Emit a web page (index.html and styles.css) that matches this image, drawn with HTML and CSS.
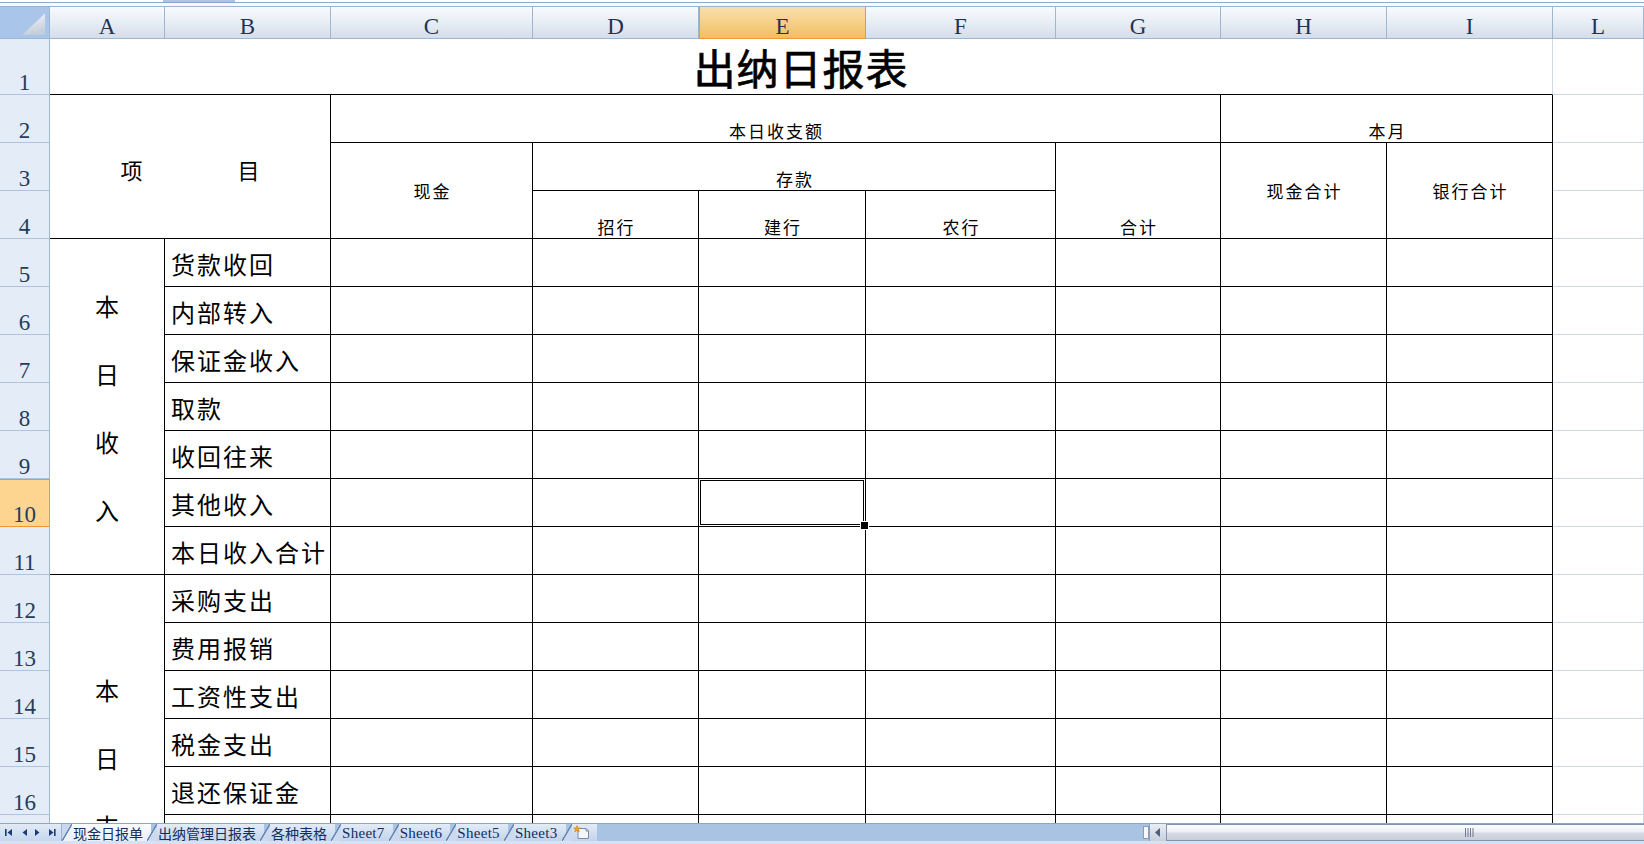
FILE: index.html
```html
<!DOCTYPE html>
<html lang="zh-CN">
<head>
<meta charset="utf-8">
<title>出纳日报表</title>
<link rel="stylesheet" href="styles.css">
</head>
<body>
<div class="top"><span class="top-gap"></span><span class="top-tab"></span></div>
<div class="sheet">
  <div class="grid">
    <div class="corner"><svg width="50" height="32" viewBox="0 0 50 32"><defs><linearGradient id="tg" x1="0" y1="0" x2="0.3" y2="1"><stop offset="0" stop-color="#f6f8fb"/><stop offset="1" stop-color="#c6cfdc"/></linearGradient></defs><polygon points="23,28 46,28 46,6" fill="url(#tg)"/></svg></div>
    <div class="ch">A</div><div class="ch">B</div><div class="ch">C</div><div class="ch">D</div><div class="ch sel">E</div><div class="ch">F</div><div class="ch">G</div><div class="ch">H</div><div class="ch">I</div><div class="ch">L</div>

    <div class="rh">1</div><div class="title">出纳日报表</div><div class="g"></div>

    <div class="rh">2</div><div class="c xm cs2 rs3"><span>项</span><span>目</span></div><div class="c hb cs5">本日收支额</div><div class="c hb cs2">本月</div><div class="g"></div>

    <div class="rh">3</div><div class="c hm rs2">现金</div><div class="c hb cs3">存款</div><div class="c hb rs2">合计</div><div class="c hm rs2">现金合计</div><div class="c hm rs2">银行合计</div><div class="g"></div>

    <div class="rh">4</div><div class="c hb">招行</div><div class="c hb">建行</div><div class="c hb">农行</div><div class="g"></div>

    <div class="rh">5</div><div class="c vt rs7">本<br>日<br>收<br>入</div><div class="c lb">货款收回</div><div class="c"></div><div class="c"></div><div class="c"></div><div class="c"></div><div class="c"></div><div class="c"></div><div class="c"></div><div class="g"></div>
    <div class="rh">6</div><div class="c lb">内部转入</div><div class="c"></div><div class="c"></div><div class="c"></div><div class="c"></div><div class="c"></div><div class="c"></div><div class="c"></div><div class="g"></div>
    <div class="rh">7</div><div class="c lb">保证金收入</div><div class="c"></div><div class="c"></div><div class="c"></div><div class="c"></div><div class="c"></div><div class="c"></div><div class="c"></div><div class="g"></div>
    <div class="rh">8</div><div class="c lb">取款</div><div class="c"></div><div class="c"></div><div class="c"></div><div class="c"></div><div class="c"></div><div class="c"></div><div class="c"></div><div class="g"></div>
    <div class="rh">9</div><div class="c lb">收回往来</div><div class="c"></div><div class="c"></div><div class="c"></div><div class="c"></div><div class="c"></div><div class="c"></div><div class="c"></div><div class="g"></div>
    <div class="rh sel">10</div><div class="c lb">其他收入</div><div class="c"></div><div class="c"></div><div class="c active"></div><div class="c"></div><div class="c"></div><div class="c"></div><div class="c"></div><div class="g"></div>
    <div class="rh">11</div><div class="c lb">本日收入合计</div><div class="c"></div><div class="c"></div><div class="c"></div><div class="c"></div><div class="c"></div><div class="c"></div><div class="c"></div><div class="g"></div>

    <div class="rh">12</div><div class="c vt rs9">本<br>日<br>支<br>出</div><div class="c lb">采购支出</div><div class="c"></div><div class="c"></div><div class="c"></div><div class="c"></div><div class="c"></div><div class="c"></div><div class="c"></div><div class="g"></div>
    <div class="rh">13</div><div class="c lb">费用报销</div><div class="c"></div><div class="c"></div><div class="c"></div><div class="c"></div><div class="c"></div><div class="c"></div><div class="c"></div><div class="g"></div>
    <div class="rh">14</div><div class="c lb">工资性支出</div><div class="c"></div><div class="c"></div><div class="c"></div><div class="c"></div><div class="c"></div><div class="c"></div><div class="c"></div><div class="g"></div>
    <div class="rh">15</div><div class="c lb">税金支出</div><div class="c"></div><div class="c"></div><div class="c"></div><div class="c"></div><div class="c"></div><div class="c"></div><div class="c"></div><div class="g"></div>
    <div class="rh">16</div><div class="c lb">退还保证金</div><div class="c"></div><div class="c"></div><div class="c"></div><div class="c"></div><div class="c"></div><div class="c"></div><div class="c"></div><div class="g"></div>
    <div class="rh">17</div><div class="c lb"></div><div class="c"></div><div class="c"></div><div class="c"></div><div class="c"></div><div class="c"></div><div class="c"></div><div class="c"></div><div class="g"></div>
    <div class="rh">18</div><div class="c lb"></div><div class="c"></div><div class="c"></div><div class="c"></div><div class="c"></div><div class="c"></div><div class="c"></div><div class="c"></div><div class="g"></div>
    <div class="rh">19</div><div class="c lb"></div><div class="c"></div><div class="c"></div><div class="c"></div><div class="c"></div><div class="c"></div><div class="c"></div><div class="c"></div><div class="g"></div>
    <div class="rh">20</div><div class="c lb"></div><div class="c"></div><div class="c"></div><div class="c"></div><div class="c"></div><div class="c"></div><div class="c"></div><div class="c"></div><div class="g"></div>
  </div>
</div>
<div class="tabbar">
  <div class="nav">
    <svg width="62" height="17" viewBox="0 0 62 17">
      <rect x="5" y="5" width="1.6" height="7" fill="#1c3c74"/>
      <polygon points="12,5 12,12 7.5,8.5" fill="#1c3c74"/>
      <polygon points="27,5 27,12 22.5,8.5" fill="#1c3c74"/>
      <polygon points="35,5 35,12 39.5,8.5" fill="#1c3c74"/>
      <polygon points="49,5 49,12 53.5,8.5" fill="#1c3c74"/>
      <rect x="54" y="5" width="1.6" height="7" fill="#1c3c74"/>
    </svg>
  </div>
  <div class="tabs">
    <div class="tab on"><span class="tl">现金日报单</span></div>
    <div class="tab"><span class="tl">出纳管理日报表</span></div>
    <div class="tab"><span class="tl">各种表格</span></div>
    <div class="tab"><span class="tl en">Sheet7</span></div>
    <div class="tab"><span class="tl en">Sheet6</span></div>
    <div class="tab"><span class="tl en">Sheet5</span></div>
    <div class="tab"><span class="tl en">Sheet3</span></div>
    <div class="tab"><span class="tl ic"><svg width="18" height="15" viewBox="0 0 18 15"><path d="M5 3.5 H13 L15.5 6 V13.5 H5 Z" fill="#f4f6fa" stroke="#7d8ca6" stroke-width="1"/><path d="M13 3.5 V6 H15.5" fill="none" stroke="#7d8ca6" stroke-width="1"/><polygon points="4,0.5 5,3 7.5,3 5.5,4.6 6.3,7 4,5.6 1.7,7 2.5,4.6 0.5,3 3,3" fill="#f3a31d" stroke="#c7760c" stroke-width="0.5"/></svg></span></div>
  </div>
  <div class="fill"></div>
  <div class="hscroll">
    <span class="split"></span>
    <span class="arrow"><svg width="12" height="17" viewBox="0 0 12 17"><polygon points="8,4 8,13 3,8.5" fill="#4a5f86"/></svg></span>
    <div class="thumb"><svg width="9" height="9" viewBox="0 0 9 9"><rect x="0" y="0" width="1" height="9" fill="#6d7a90"/><rect x="2.5" y="0" width="1" height="9" fill="#6d7a90"/><rect x="5" y="0" width="1" height="9" fill="#6d7a90"/><rect x="7.5" y="0" width="1" height="9" fill="#6d7a90"/></svg></div>
  </div>
</div>
<div class="status"></div>
</body>
</html>
```

FILE: styles.css
```css
* { box-sizing: border-box; }
html, body { margin: 0; padding: 0; }
body {
  width: 1644px;
  height: 844px;
  overflow: hidden;
  background: #ffffff;
  font-family: "Noto Sans CJK SC", "Noto Sans", sans-serif;
  color: #000;
}

/* strip above the column header */
.top {
  height: 7px;
  display: flex;
  align-items: flex-start;
  background: linear-gradient(#ffffff 0 2px, #8ea6c7 2px 3px, #f7f9fc 3px 6px, #9bb2cf 6px 7px);
}
.top-gap { width: 163px; }
.top-tab { width: 72px; height: 2px; background: #aac4e6; }

/* sheet */
.sheet {
  height: 816px;
  overflow: hidden;
}
.grid {
  display: grid;
  grid-template-columns: 50px 115px 166px 202px 166px 167px 190px 165px 166px 166px 91px;
  grid-template-rows: 32px 56px repeat(19, 48px);
}

.corner {
  background: #aac5ea;
  border-right: 1px solid #9eb6ce;
  border-bottom: 1px solid #9eb6ce;
  display: flex;
}
.ch {
  background: linear-gradient(#f8fafd, #e6ecf4 55%, #d5dde9);
  border-right: 1px solid #9eb6ce;
  border-bottom: 1px solid #9eb6ce;
  display: flex;
  justify-content: center;
  align-items: flex-end;
  font-family: "Liberation Serif", "DejaVu Serif", serif;
  font-size: 23px;
  line-height: 23px;
  color: #1e3455;
}
.ch.sel {
  background: linear-gradient(#f9dfae, #f6d089 50%, #f1bf5c);
  border-right-color: #f29536;
  border-bottom-color: #f29536;
  border-left: 1px solid #f29536;
}
.rh {
  background: #e4ecf7;
  border-right: 1px solid #9eb6ce;
  border-bottom: 1px solid #b0c3dc;
  display: flex;
  justify-content: center;
  align-items: flex-end;
  font-family: "Liberation Serif", "DejaVu Serif", serif;
  font-size: 23px;
  line-height: 23px;
  color: #233d5e;
}
.rh.sel {
  background: #fed590;
  border: 1px solid #f29536;
  border-left: none;
}

/* cells */
.c {
  border-right: 1px solid #000;
  border-bottom: 1px solid #000;
  min-width: 0;
  display: flex;
}
.g {
  border-right: 1px solid #d0d7e5;
  border-bottom: 1px solid #d0d7e5;
}
.cs2 { grid-column: span 2; }
.cs3 { grid-column: span 3; }
.cs5 { grid-column: span 5; }
.rs2 { grid-row: span 2; }
.rs3 { grid-row: span 3; }
.rs7 { grid-row: span 7; }
.rs9 { grid-row: span 9; }

.title {
  grid-column: span 9;
  border-right: 1px solid #d0d7e5;
  border-bottom: 1px solid #000;
  display: flex;
  justify-content: center;
  align-items: flex-end;
  padding-bottom: 6px;
  font-size: 42px;
  line-height: 42px;
  font-weight: 400;
  letter-spacing: 1px;
  -webkit-text-stroke: 0.7px #000;
}

/* header texts */
.hb, .hm {
  justify-content: center;
  font-size: 17px;
  line-height: 17px;
  letter-spacing: 2px;
  text-indent: 2px;
}
.hb { align-items: flex-end; padding-bottom: 3px; }
.hm { align-items: center; }

.xm {
  justify-content: center;
  align-items: center;
  gap: 95px;
  padding-top: 4px;
  font-size: 22px;
  line-height: 22px;
}

.vt {
  justify-content: center;
  align-items: center;
  text-align: center;
  font-size: 24px;
  line-height: 68px;
  padding-top: 2px;
}

.lb {
  align-items: center;
  padding-left: 6px;
  padding-top: 2px;
  font-size: 24px;
  line-height: 24px;
  letter-spacing: 2px;
  white-space: nowrap;
  overflow: hidden;
}

.active {
  position: relative;
  box-shadow: inset 0 0 0 1px #fff, inset 0 0 0 2px #000;
}
.active::after {
  content: "";
  position: absolute;
  right: -4px;
  bottom: -4px;
  width: 7px;
  height: 7px;
  background: #000;
  border: 1px solid #fff;
  z-index: 2;
}

/* sheet tabs */
.tabbar {
  height: 18px;
  display: flex;
  border-top: 1px solid #8ea6c7;
  background: #a9c3e3;
}
.nav {
  width: 62px;
  height: 17px;
  background: linear-gradient(#e2eaf6, #c6d7ee);
  border-right: 1px solid #9cb3d2;
}
.nav svg { display: block; }
.tabs { display: flex; height: 17px; }
.tab {
  display: flex;
  height: 17px;
  margin-left: -4px;
}
.tab:first-child { margin-left: 0; }
.tab::before {
  content: "";
  width: 10px;
  height: 17px;
  background: linear-gradient(to bottom right, transparent calc(50% - 1px), #6a88b6 calc(50% - 0.5px), #6a88b6 calc(50% + 0.5px), #cbdaef calc(50% + 1px));
}
.tab.on::before {
  background: linear-gradient(to bottom right, #c9d8ee calc(50% - 1px), #6a88b6 calc(50% - 0.5px), #6a88b6 calc(50% + 0.5px), #eef3fa calc(50% + 1px));
}
.tl {
  display: flex;
  align-items: center;
  padding: 0 8px 0 1px;
  height: 17px;
  background: linear-gradient(#e3ebf7, #c2d4ec);
  font-size: 14px;
  line-height: 14px;
  color: #112e5e;
  white-space: nowrap;
}
.tab.on .tl { background: linear-gradient(#fbfcfe, #e8eff9); }
.tl.en {
  font-family: "Liberation Serif", "DejaVu Serif", serif;
  font-size: 15px;
  letter-spacing: 0.3px;
}
.tl.ic { padding: 0 6px 0 1px; }
.tl.ic svg { display: block; }

.fill { flex: 1; }
.hscroll {
  width: 502px;
  height: 17px;
  display: flex;
  align-items: stretch;
}
.split {
  width: 6px;
  margin: 2px 0 2px 1px;
  background: #f7f9fc;
  border: 1px solid #8b9cb8;
}
.arrow {
  width: 17px;
  display: flex;
  justify-content: center;
  background: linear-gradient(#e9edf3, #c9d0dc);
  border-left: 1px solid #8b9cb8;
}
.arrow svg { display: block; }
.thumb {
  flex: 1;
  display: flex;
  align-items: center;
  padding-left: 298px;
  background: linear-gradient(#fbfcfd, #eef0f4 45%, #d4d9e2 55%, #c8ced9);
  border: 1px solid #8193b0;
  border-right: none;
}
.thumb svg { display: block; }

.status {
  height: 3px;
  background: #d6e2f1;
}
```
